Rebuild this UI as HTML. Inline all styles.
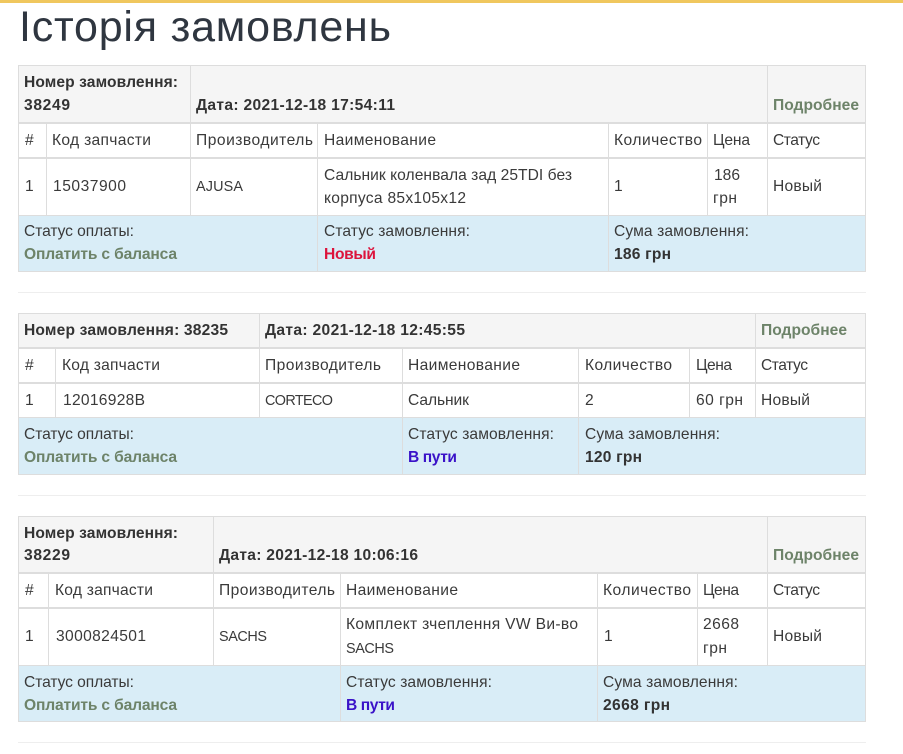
<!DOCTYPE html>
<html lang="uk">
<head>
<meta charset="utf-8">
<title>Історія замовлень</title>
<style>
html,body{margin:0;padding:0;background:#fff;width:903px;height:754px;overflow:hidden}
svg{display:block}
text{font-family:"Liberation Sans",sans-serif;font-size:15.6px;fill:#3a3a3a}
.b{font-weight:bold;fill:#333}
.g{font-weight:bold;fill:#6d8369}
.r{font-weight:bold;fill:#dc143c}
.u{font-weight:bold;fill:#3a12c8}
.h{font-size:43px;fill:#2f3640}
.s{font-size:14.4px}
.l{fill:#ddd}
.m{fill:#eee}
</style>
</head>
<body>
<svg width="903" height="754" viewBox="0 0 903 754" xmlns="http://www.w3.org/2000/svg">
<rect x="0" y="0" width="903" height="3" fill="#f0c75e"/>
<text class="h" x="19" y="41" textLength="372">Історія замовлень</text>

<!-- Table 1 -->
<rect x="18" y="65" width="848" height="58" fill="#f5f5f5"/>
<rect x="18" y="216" width="848" height="56" fill="#d9edf7"/>
<rect class="l" x="18" y="65" width="848" height="1"/>
<rect class="l" x="18" y="122" width="848" height="2"/>
<rect class="l" x="18" y="157" width="848" height="2"/>
<rect class="l" x="18" y="215" width="848" height="1"/>
<rect class="l" x="18" y="271" width="848" height="1"/>
<rect class="l" x="18" y="65" width="1" height="207"/>
<rect class="l" x="865" y="65" width="1" height="207"/>
<rect class="l" x="190" y="65" width="1" height="150"/>
<rect class="l" x="767" y="65" width="1" height="150"/>
<rect class="l" x="46" y="124" width="1" height="91"/>
<rect class="l" x="317" y="124" width="1" height="147"/>
<rect class="l" x="608" y="124" width="1" height="147"/>
<rect class="l" x="707" y="124" width="1" height="91"/>
<text class="b" x="24" y="87" textLength="154">Номер замовлення:</text>
<text class="b" x="24" y="110" textLength="46">38249</text>
<text class="b" x="196" y="110" textLength="199">Дата: 2021-12-18 17:54:11</text>
<text class="g" x="773" y="110" textLength="86">Подробнее</text>
<text x="25" y="145">#</text>
<text x="52" y="145" textLength="99">Код запчасти</text>
<text x="196" y="145" textLength="117">Производитель</text>
<text x="324" y="145" textLength="112">Наименование</text>
<text x="614" y="145" textLength="88">Количество</text>
<text x="713" y="145" textLength="37">Цена</text>
<text x="773" y="145" textLength="47">Статус</text>
<text x="25" y="191">1</text>
<text x="53" y="191" textLength="73">15037900</text>
<text class="s" x="196" y="191" textLength="47">AJUSA</text>
<text x="324" y="180" textLength="248">Сальник коленвала зад 25TDI без</text>
<text x="324" y="203" textLength="142">корпуса 85х105х12</text>
<text x="614" y="191">1</text>
<text x="714" y="180" textLength="26">186</text>
<text x="713" y="203" textLength="24">грн</text>
<text x="773" y="191" textLength="49">Новый</text>
<text x="24" y="236" textLength="110">Статус оплаты:</text>
<text class="g" x="24" y="259" textLength="153">Оплатить с баланса</text>
<text x="324" y="236" textLength="146">Статус замовлення:</text>
<text class="r" x="324" y="259" textLength="52">Новый</text>
<text x="614" y="236" textLength="135">Сума замовлення:</text>
<text class="b" x="614" y="259" textLength="57">186 грн</text>

<rect class="m" x="18" y="292" width="848" height="1"/>

<!-- Table 2 -->
<rect x="18" y="313" width="848" height="35" fill="#f5f5f5"/>
<rect x="18" y="418" width="848" height="57" fill="#d9edf7"/>
<rect class="l" x="18" y="313" width="848" height="1"/>
<rect class="l" x="18" y="347" width="848" height="2"/>
<rect class="l" x="18" y="382" width="848" height="2"/>
<rect class="l" x="18" y="417" width="848" height="1"/>
<rect class="l" x="18" y="474" width="848" height="1"/>
<rect class="l" x="18" y="313" width="1" height="162"/>
<rect class="l" x="865" y="313" width="1" height="162"/>
<rect class="l" x="259" y="313" width="1" height="104"/>
<rect class="l" x="755" y="313" width="1" height="104"/>
<rect class="l" x="55" y="349" width="1" height="68"/>
<rect class="l" x="402" y="349" width="1" height="125"/>
<rect class="l" x="578" y="349" width="1" height="125"/>
<rect class="l" x="689" y="349" width="1" height="68"/>
<text class="b" x="24" y="335" textLength="204">Номер замовлення: 38235</text>
<text class="b" x="265" y="335" textLength="200">Дата: 2021-12-18 12:45:55</text>
<text class="g" x="761" y="335" textLength="86">Подробнее</text>
<text x="25" y="370">#</text>
<text x="62" y="370" textLength="98">Код запчасти</text>
<text x="265" y="370" textLength="116">Производитель</text>
<text x="408" y="370" textLength="112">Наименование</text>
<text x="585" y="370" textLength="87">Количество</text>
<text x="696" y="370" textLength="36">Цена</text>
<text x="761" y="370" textLength="47">Статус</text>
<text x="25" y="405">1</text>
<text x="63" y="405" textLength="82">12016928B</text>
<text class="s" x="265" y="405" textLength="68">CORTECO</text>
<text x="408" y="405" textLength="61">Сальник</text>
<text x="585" y="405">2</text>
<text x="696" y="405" textLength="47">60 грн</text>
<text x="761" y="405" textLength="49">Новый</text>
<text x="24" y="439" textLength="110">Статус оплаты:</text>
<text class="g" x="24" y="462" textLength="153">Оплатить с баланса</text>
<text x="408" y="439" textLength="146">Статус замовлення:</text>
<text class="u" x="408" y="462" textLength="49">В пути</text>
<text x="585" y="439" textLength="135">Сума замовлення:</text>
<text class="b" x="585" y="462" textLength="57">120 грн</text>

<rect class="m" x="18" y="495" width="848" height="1"/>

<!-- Table 3 -->
<rect x="18" y="516" width="848" height="57" fill="#f5f5f5"/>
<rect x="18" y="666" width="848" height="56" fill="#d9edf7"/>
<rect class="l" x="18" y="516" width="848" height="1"/>
<rect class="l" x="18" y="572" width="848" height="2"/>
<rect class="l" x="18" y="607" width="848" height="2"/>
<rect class="l" x="18" y="665" width="848" height="1"/>
<rect class="l" x="18" y="721" width="848" height="1"/>
<rect class="l" x="18" y="516" width="1" height="206"/>
<rect class="l" x="865" y="516" width="1" height="206"/>
<rect class="l" x="213" y="516" width="1" height="149"/>
<rect class="l" x="767" y="516" width="1" height="149"/>
<rect class="l" x="48" y="574" width="1" height="91"/>
<rect class="l" x="340" y="574" width="1" height="147"/>
<rect class="l" x="597" y="574" width="1" height="147"/>
<rect class="l" x="697" y="574" width="1" height="91"/>
<text class="b" x="24" y="538" textLength="154">Номер замовлення:</text>
<text class="b" x="24" y="560" textLength="46">38229</text>
<text class="b" x="219" y="560" textLength="199">Дата: 2021-12-18 10:06:16</text>
<text class="g" x="773" y="560" textLength="86">Подробнее</text>
<text x="25" y="595">#</text>
<text x="55" y="595" textLength="98">Код запчасти</text>
<text x="219" y="595" textLength="116">Производитель</text>
<text x="346" y="595" textLength="112">Наименование</text>
<text x="603" y="595" textLength="88">Количество</text>
<text x="703" y="595" textLength="36">Цена</text>
<text x="773" y="595" textLength="47">Статус</text>
<text x="25" y="641">1</text>
<text x="56" y="641" textLength="90">3000824501</text>
<text class="s" x="219" y="641" textLength="48">SACHS</text>
<text x="346" y="629" textLength="232">Комплект зчеплення VW Ви-во</text>
<text class="s" x="346" y="653" textLength="48">SACHS</text>
<text x="604" y="641">1</text>
<text x="703" y="629" textLength="36">2668</text>
<text x="703" y="653" textLength="24">грн</text>
<text x="773" y="641" textLength="49">Новый</text>
<text x="24" y="687" textLength="110">Статус оплаты:</text>
<text class="g" x="24" y="710" textLength="153">Оплатить с баланса</text>
<text x="346" y="687" textLength="146">Статус замовлення:</text>
<text class="u" x="346" y="710" textLength="49">В пути</text>
<text x="603" y="687" textLength="135">Сума замовлення:</text>
<text class="b" x="603" y="710" textLength="67">2668 грн</text>

<rect class="m" x="18" y="742" width="848" height="1"/>
</svg>
</body>
</html>
